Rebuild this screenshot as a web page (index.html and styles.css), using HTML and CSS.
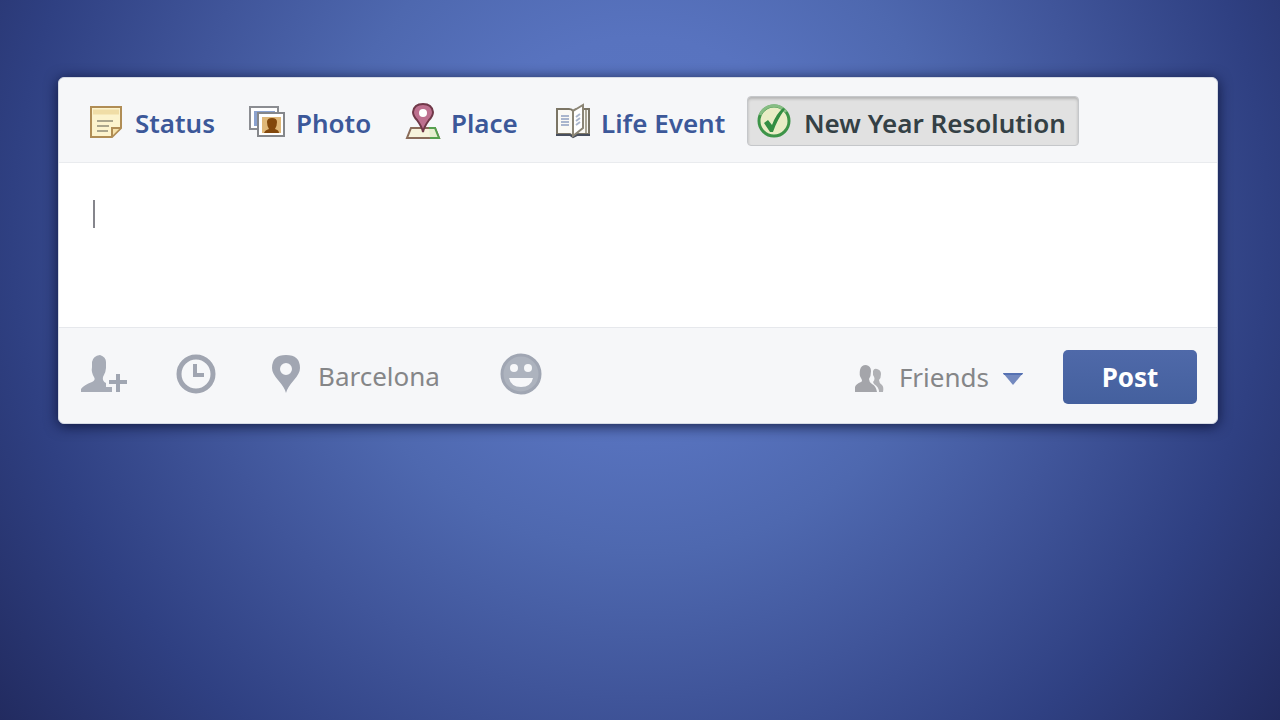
FILE: index.html
```html
<!DOCTYPE html>
<html lang="en">
<head>
    <meta charset="UTF-8">
    <meta name="viewport" content="width=device-width, initial-scale=1.0">
    <title>New Year Resolution</title>
    <link rel="stylesheet" href="styles.css">
</head>
<body>

    <form class="composer">
        <nav class="tabs">
            <button type="button" class="tab">
                <svg class="tab-icon" viewBox="0 0 36 36">
                    <path d="M2 4H32V25L23 34H2Z" fill="#fcf3cd" stroke="#b08d55" stroke-width="2"/>
                    <path d="M4 9H30" stroke="#f0dda6" stroke-width="5"/>
                    <path d="M23 33V25H31" fill="#f6e2ab" stroke="#b08d55" stroke-width="2"/>
                    <path d="M8 18H24M8 23H20M8 28H19" stroke="#aaa58c" stroke-width="2"/>
                </svg>
                <span>Status</span>
            </button>
            <button type="button" class="tab">
                <svg class="tab-icon wide" viewBox="0 0 38 38">
                    <rect x="2" y="5" width="28" height="22" fill="#fff" stroke="#8b8d92" stroke-width="2"/>
                    <rect x="6" y="9" width="21" height="15" fill="#8ba2cf"/>
                    <rect x="10" y="11" width="26" height="23" fill="#fff" stroke="#85878b" stroke-width="2"/>
                    <rect x="14" y="15" width="19" height="16" fill="#e0b878"/>
                    <path d="M16 31Q17 28 21 27Q19 24 19 20Q19 16 24 16Q29 16 29 20Q29 24 27 27Q31 28 31 31Z" fill="#83480c"/>
                </svg>
                <span>Photo</span>
            </button>
            <button type="button" class="tab">
                <svg class="tab-icon" viewBox="0 0 36 38">
                    <path d="M6 26H30L34 36H2Z" fill="#f7f3dc" stroke="#8a6c5a" stroke-width="2"/>
                    <path d="M24 26H30L34 36H25" fill="#e5efcf" stroke="#55a04e" stroke-width="2"/>
                    <path d="M18 30Q17 25 12 18Q8 14 8 10Q9 2 18 2Q27 2 28 10Q28 14 24 18Q19 25 18 30Z" fill="#bd708f" stroke="#703849" stroke-width="2"/>
                    <circle cx="18" cy="11" r="4" fill="#fff"/>
                </svg>
                <span>Place</span>
            </button>
            <button type="button" class="tab">
                <svg class="tab-icon" viewBox="0 0 36 36">
                    <path d="M2 6H14Q17 6 18 8Q20 6 23 6H34V31H22L18 33L15 31H2Z" fill="#faf9f4" stroke="#7b7565" stroke-width="2"/>
                    <path d="M1 32H15L18 34L22 32H35" fill="none" stroke="#474e5d" stroke-width="2"/>
                    <path d="M18 8L28 2V25L18 33Z" fill="#fff" stroke="#8b8575" stroke-width="2"/>
                    <path d="M31 7V30" stroke="#aaa594" stroke-width="2"/>
                    <path d="M6 13H14M6 16H14M6 19H14M6 22H14" stroke="#aab6cd" stroke-width="2"/>
                    <path d="M21 14L25 11M21 18L25 15M21 22L25 19" stroke="#aab6cd" stroke-width="2"/>
                </svg>
                <span>Life Event</span>
            </button>
            <button type="button" class="tab active">
                <svg class="tab-icon" viewBox="0 0 36 36">
                    <circle cx="18" cy="18" r="15" fill="#e9edc5" stroke="#3d9448" stroke-width="3"/>
                    <path d="M4 12A15 15 0 0 1 30 9" fill="none" stroke="#86bd83" stroke-width="3"/>
                    <path d="M8 20L12 17L16 22Q20 11 27 5L29 6Q21 17 17 29H14Z" fill="#338e42"/>
                </svg>
                <span>New Year Resolution</span>
            </button>
        </nav>

        <div class="message">
            <span class="caret"></span>
            <textarea aria-label="Your resolution"></textarea>
        </div>

        <div class="footer">
            <div class="tools">
                <button type="button" class="tool" aria-label="Tag people">
                    <svg width="48" height="40" viewBox="0 0 48 40">
                        <path d="M1 38V35Q4 31 12 28Q16 26 14 23Q11 18 12 13V8Q13 2 20 1Q26 3 26 8V14Q26 18 23 23Q22 27 26 29V33H32V38Z" fill="#a7acb7"/>
                        <path d="M37 20V38M28 28H47" stroke="#f6f7f9" stroke-width="7"/>
                        <path d="M38 20V38M29 28H47" stroke="#a0a6b2" stroke-width="4"/>
                    </svg>
                </button>
                <button type="button" class="tool" aria-label="Add date">
                    <svg width="40" height="40" viewBox="0 0 40 40">
                        <circle cx="20" cy="20" r="17" fill="none" stroke="#a0a5b1" stroke-width="5"/>
                        <path d="M19 10V21H28" fill="none" stroke="#a0a5b1" stroke-width="4"/>
                    </svg>
                </button>
                <button type="button" class="tool place">
                    <svg width="28" height="40" viewBox="0 0 28 40">
                        <path d="M14 39Q13 34 6 26Q0 19 0 14Q0 1 14 1Q28 1 28 14Q28 19 22 26Q15 34 14 39ZM14 9A6 6 0 1 0 14 21A6 6 0 1 0 14 9Z" fill="#a1a6b2" fill-rule="evenodd"/>
                    </svg>
                    <span>Barcelona</span>
                </button>
                <button type="button" class="tool" aria-label="Add feeling">
                    <svg width="42" height="42" viewBox="-1 0 42 42">
                        <circle cx="20" cy="21" r="19" fill="#adb3be" stroke="#a0a6b3" stroke-width="3"/>
                        <circle cx="13" cy="15" r="4" fill="#f6f7f9"/>
                        <circle cx="27" cy="15" r="4" fill="#f6f7f9"/>
                        <path d="M8 25H32Q30 34 20 34Q10 34 8 25Z" fill="#f6f7f9"/>
                    </svg>
                </button>
            </div>
            <button type="button" class="audience">
                <svg width="30" height="28" viewBox="0 0 30 28">
                    <path d="M18 6Q19 3 22 4Q26 5 26 9Q26 13 24 15Q24 18 27 20Q29 22 28 27H24Q24 22 19 19L18 17Q21 14 18 10Z" fill="#b0b1b5"/>
                    <path d="M0 27V22Q1 19 6 17Q8 16 6 13Q4 10 5 5Q6 0 11 0Q16 1 16 6Q16 11 14 14Q14 17 17 19Q21 21 22 27Z" fill="#a4a5aa"/>
                </svg>
                <span>Friends</span>
                <svg width="20" height="12" viewBox="0 0 20 12">
                    <path d="M0 0H20L10 12Z" fill="#7389bf"/>
                    <path d="M0 0H20L19 2H1Z" fill="#5571b2"/>
                </svg>
            </button>
            <button type="submit" class="post">Post</button>
        </div>
    </form>

</body>
</html>
```

FILE: styles.css
```css
body {
    margin: 0;
    padding: 77px 62px 0 58px;
    min-height: 100vh;
    box-sizing: border-box;
    font-family: "Noto Sans", "Open Sans", sans-serif;
    background: radial-gradient(circle farthest-corner at 50% 32%, #5b77c4 0%, #5873bf 24%, #4e68af 40%, #40559a 58%, #2f4082 78%, #222b60 100%);
}

button {
    border: none;
    background: none;
    padding: 0;
    font-family: inherit;
    font-size: 26px;
    cursor: pointer;
}

.composer {
    background-color: #f6f7f9;
    border: 1px solid #d5dae4;
    border-radius: 6px;
    box-shadow: 0 2px 14px rgba(5, 10, 40, 0.8);
    overflow: hidden;
}

.tabs {
    display: grid;
    grid-template-columns: 159px 157px 150px 201px 332px;
    justify-content: start;
    padding: 18px 21px 16px;
}

.tab {
    display: flex;
    align-items: center;
    gap: 10px;
    height: 50px;
    padding: 0 8px;
    border: 1px solid transparent;
    border-radius: 4px;
    font-weight: 600;
    color: #3c5899;
    white-space: nowrap;
}

.tab-icon {
    width: 36px;
    height: 38px;
    flex: none;
}

.tab-icon.wide {
    width: 38px;
}

.tab span {
    padding-top: 4px;
}

.tab.active {
    gap: 12px;
    background-color: #e1e1e1;
    border-color: #c5c7ca;
    box-shadow: inset 0 2px 3px rgba(0, 0, 0, 0.2);
    color: #344045;
}

.message {
    display: flex;
    padding: 37px 34px 36px;
    background-color: #fff;
    border-top: 1px solid #e9ebee;
    border-bottom: 1px solid #e6e8ec;
}

.caret {
    width: 2px;
    height: 28px;
    background-color: #85858c;
}

.message textarea {
    flex: 1;
    height: 91px;
    padding: 0;
    border: none;
    outline: none;
    resize: none;
    font-family: inherit;
    font-size: 26px;
    color: #333;
}

.footer {
    display: flex;
    align-items: center;
    padding: 22px 20px 19px 21px;
}

.tools {
    display: flex;
    align-items: center;
    flex: 1;
    gap: 48px;
    padding-bottom: 6px;
}

.tool {
    display: flex;
    align-items: center;
    gap: 18px;
    color: #858688;
}

.tool span {
    padding-top: 4px;
}

.tool.place {
    width: 180px;
    margin-left: 8px;
}

.audience {
    display: flex;
    align-items: center;
    gap: 14px;
    margin-right: 40px;
    color: #858688;
}

.audience svg {
    margin-top: 4px;
}

.post {
    width: 134px;
    height: 54px;
    border-radius: 5px;
    background: linear-gradient(#4f69a9, #44609e);
    color: #fff;
    font-weight: 700;
}
```
